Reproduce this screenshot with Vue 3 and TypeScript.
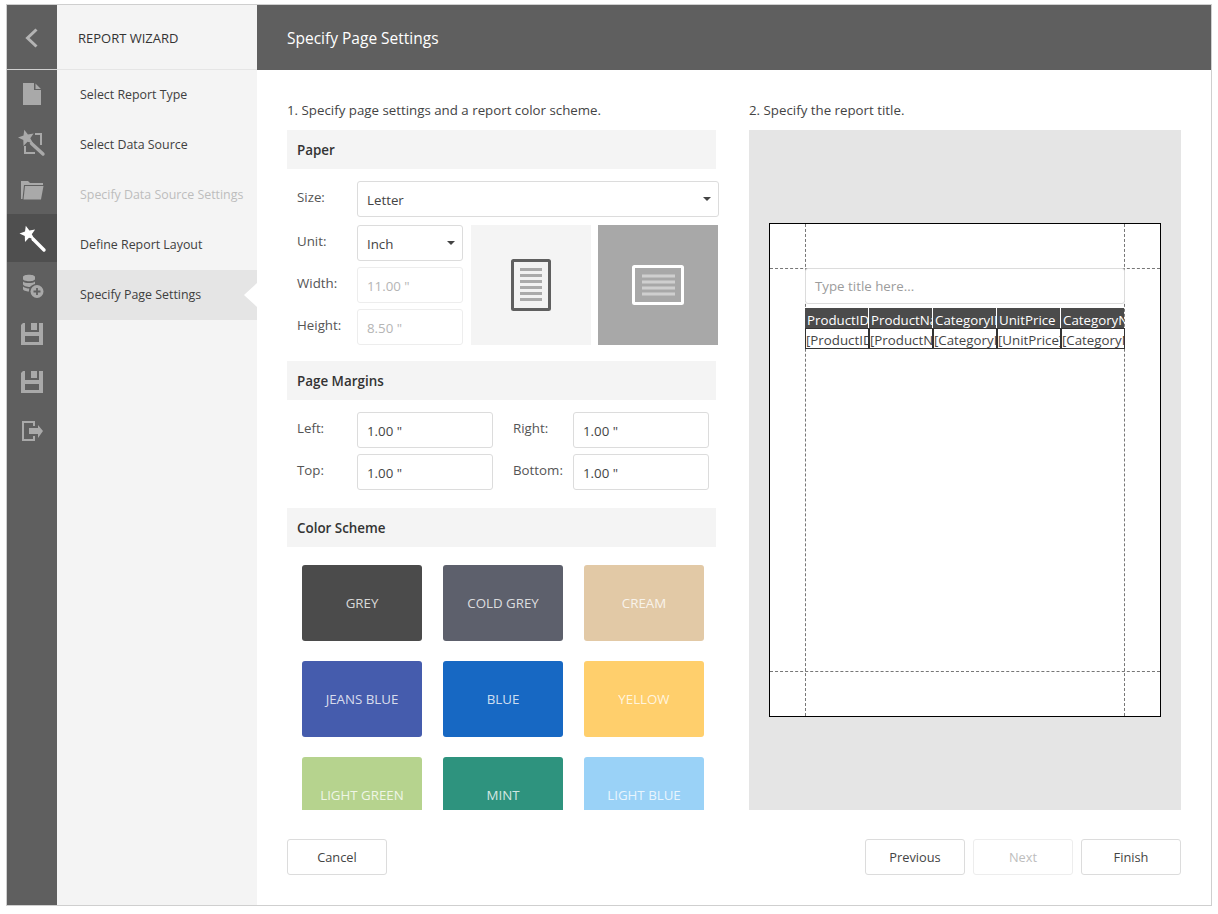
<script setup lang="ts">
import { ref } from 'vue'

interface Step {
  label: string
  disabled?: boolean
  active?: boolean
}

interface Scheme {
  name: string
  color: string
}

const steps = ref<Step[]>([
  { label: 'Select Report Type' },
  { label: 'Select Data Source' },
  { label: 'Specify Data Source Settings', disabled: true },
  { label: 'Define Report Layout' },
  { label: 'Specify Page Settings', active: true },
])

const schemes = ref<Scheme[]>([
  { name: 'GREY', color: '#4b4b4b' },
  { name: 'COLD GREY', color: '#5d606c' },
  { name: 'CREAM', color: '#e2c9a6' },
  { name: 'JEANS BLUE', color: '#455cad' },
  { name: 'BLUE', color: '#1768c3' },
  { name: 'YELLOW', color: '#ffcf6c' },
  { name: 'LIGHT GREEN', color: '#b6d38e' },
  { name: 'MINT', color: '#2e937e' },
  { name: 'LIGHT BLUE', color: '#9ad2f7' },
])

const columns = ref([
  { head: 'ProductID', cell: '[ProductID]' },
  { head: 'ProductName', cell: '[ProductName]' },
  { head: 'CategoryID', cell: '[CategoryID]' },
  { head: 'UnitPrice', cell: '[UnitPrice]' },
  { head: 'CategoryName', cell: '[CategoryName]' },
])
</script>

<template>
  <div class="screen">
    <div class="wizard">
      <aside class="rail">
        <div class="rail-back">
          <svg width="50" height="64" viewBox="0 0 50 64">
            <path d="M29.500 24.500 L20.500 33 L29.500 41.500" fill="none" stroke="#b4b4b4" stroke-width="3" />
          </svg>
        </div>
        <div class="rail-btn">
          <svg width="50" height="48" viewBox="0 0 50 48">
            <path d="M16 13 H27 V20 H34 V35 H16 Z M28.500 13.500 L34 19 H28.500 Z" fill="#a9a9a9" />
          </svg>
        </div>
        <div class="rail-btn">
          <svg width="50" height="48" viewBox="0 0 50 48">
            <path transform="translate(-1.500 0)" d="M18.800 11.800 L22.400 16.500 L28.100 15.400 L24.800 20.200 L27.600 25.300 L22 23.700 L18 27.900 L17.800 22.100 L12.500 19.600 L18 17.600 Z" fill="#a9a9a9" />
            <path d="M28 16 H34 V27 M18 28 V35 H28" fill="none" stroke="#a9a9a9" stroke-width="2" />
            <path d="M24.500 25.500 L36 36" fill="none" stroke="#a9a9a9" stroke-width="3.400" stroke-linecap="round" />
          </svg>
        </div>
        <div class="rail-btn">
          <svg width="50" height="48" viewBox="0 0 50 48">
            <path d="M14 15 H21 L23 17 H36 V19 H17 L15.500 33 H14 Z" fill="#a9a9a9" />
            <path d="M18 20 H36.500 L34 33.500 H16.500 Z" fill="#a9a9a9" />
          </svg>
        </div>
        <div class="rail-btn rail-current">
          <svg width="50" height="48" viewBox="0 0 50 48">
            <path d="M18.800 11.800 L22.400 16.500 L28.100 15.400 L24.800 20.200 L27.600 25.300 L22 23.700 L18 27.900 L17.800 22.100 L12.500 19.600 L18 17.600 Z" fill="#fff" />
            <path d="M26 25 L37 36" fill="none" stroke="#fff" stroke-width="3.400" stroke-linecap="round" />
          </svg>
        </div>
        <div class="rail-btn">
          <svg width="50" height="48" viewBox="0 0 50 48">
            <path d="M16 15 C16 12 28 12 28 15 V17 C28 20 16 20 16 17 Z M16 19.500 C18 21.500 26 21.500 28 19.500 V22 C26 22.500 24 23.500 23 25 C20 25 16 24 16 22 Z M16 24.500 C18 26 20 26.500 22.300 26.500 C22 27.500 22 28.500 22 29.500 C19 29.500 16 28.500 16 27 Z" fill="#a9a9a9" />
            <circle cx="30" cy="29.500" r="6.500" fill="#a9a9a9" />
            <path d="M30 26 V33 M26.500 29.500 H33.500" stroke="#5f5f5f" stroke-width="1.800" />
          </svg>
        </div>
        <div class="rail-btn">
          <svg width="50" height="48" viewBox="0 0 50 48">
            <path d="M16 13 H18 V22 H32 V13 H36 V35 H14 V15 Z M18 26 V32 H32 V26 Z M24 13 H30 V20 H24 Z" fill="#a9a9a9" fill-rule="evenodd" />
          </svg>
        </div>
        <div class="rail-btn">
          <svg width="50" height="48" viewBox="0 0 50 48">
            <path d="M16 13 H18 V22 H32 V13 H36 V35 H14 V15 Z M18 26 V32 H32 V26 Z M24 13 H30 V20 H24 Z" fill="#a9a9a9" fill-rule="evenodd" />
          </svg>
        </div>
        <div class="rail-btn">
          <svg width="50" height="48" viewBox="0 0 50 48">
            <path d="M27 20 V16 H16 V34 H27 V30" fill="none" stroke="#a9a9a9" stroke-width="2" />
            <path d="M22 22 H31 V19 L36 25 L31 32 V28 H22 Z" fill="#a9a9a9" />
          </svg>
        </div>
      </aside>

      <nav class="steps">
        <div class="steps-title">REPORT WIZARD</div>
        <div
          v-for="step in steps"
          :key="step.label"
          class="step"
          :class="{ 'step-off': step.disabled, 'step-on': step.active }"
        >
          {{ step.label }}
        </div>
      </nav>

      <main class="main">
        <header class="main-head">Specify Page Settings</header>
        <div class="body">
          <section class="column">
            <p class="hint">1. Specify page settings and a report color scheme.</p>
            <div class="scroller">
              <h3 class="group">Paper</h3>
              <div class="size-row">
                <label class="lbl">Size:</label>
                <div class="box select size-select">Letter<span class="caret"></span></div>
              </div>
              <div class="paper-row">
                <div class="paper-fields">
                  <div class="paper-field">
                    <label class="lbl">Unit:</label>
                    <div class="box select unit">Inch<span class="caret"></span></div>
                  </div>
                  <div class="paper-field">
                    <label class="lbl">Width:</label>
                    <div class="box unit off">11.00 "</div>
                  </div>
                  <div class="paper-field">
                    <label class="lbl">Height:</label>
                    <div class="box unit off">8.50 "</div>
                  </div>
                </div>
                <div class="orient">
                  <svg width="40" height="52" viewBox="0 0 40 52">
                    <rect x="1.500" y="1.500" width="37" height="49" fill="#f2f2f2" stroke="#5f5f5f" stroke-width="3" rx="1" />
                    <path d="M9 10.500 H31 M9 16.500 H31 M9 22.500 H31 M9 28.500 H31 M9 34.500 H31 M9 40.500 H31" stroke="#aaa" stroke-width="3" />
                  </svg>
                </div>
                <div class="orient orient-on">
                  <svg width="52" height="40" viewBox="0 0 52 40">
                    <rect x="1.500" y="1.500" width="49" height="37" fill="#a8a8a8" stroke="#fff" stroke-width="3" rx="1" />
                    <path d="M10 11 H43 M10 17 H43 M10 23 H43 M10 29 H43" stroke="#cfcfcf" stroke-width="3" />
                  </svg>
                </div>
              </div>

              <h3 class="group margins-head">Page Margins</h3>
              <div class="margins">
                <label class="lbl">Left:</label>
                <div class="box margin">1.00 "</div>
                <label class="lbl lbl-right">Right:</label>
                <div class="box margin">1.00 "</div>
                <label class="lbl">Top:</label>
                <div class="box margin">1.00 "</div>
                <label class="lbl lbl-right">Bottom:</label>
                <div class="box margin">1.00 "</div>
              </div>

              <h3 class="group">Color Scheme</h3>
              <div class="schemes">
                <div v-for="s in schemes" :key="s.name" class="scheme" :style="{ background: s.color }">
                  {{ s.name }}
                </div>
              </div>
            </div>
          </section>

          <section class="column">
            <p class="hint">2. Specify the report title.</p>
            <div class="preview">
              <div class="page">
                <span class="guide guide-v guide-l"></span>
                <span class="guide guide-v guide-r"></span>
                <span class="guide guide-h guide-t"></span>
                <span class="guide guide-h guide-b"></span>
                <div class="title-box">Type title here...</div>
                <div class="report-table">
                  <div v-for="c in columns" :key="c.head" class="report-col">
                    <div class="report-head">{{ c.head }}</div>
                    <div class="report-cell">{{ c.cell }}</div>
                  </div>
                </div>
              </div>
            </div>
          </section>
        </div>

        <footer class="actions">
          <button class="btn">Cancel</button>
          <span class="spacer"></span>
          <button class="btn">Previous</button>
          <button class="btn btn-off">Next</button>
          <button class="btn">Finish</button>
        </footer>
      </main>
    </div>
  </div>
</template>

<style>
html,
body {
  margin: 0;
  background: #fff;
}
</style>

<style scoped>
.screen {
  width: 1218px;
  height: 914px;
  padding: 4px 6px 8px 6px;
  box-sizing: border-box;
  font-family: 'Open Sans', 'Noto Sans', sans-serif;
  font-size: 13.3px;
  color: #555;
}

.wizard {
  display: flex;
  height: 100%;
  width: 1206px;
  border: 1px solid #cfcfcf;
  box-sizing: border-box;
  overflow: hidden;
}

.rail {
  width: 50px;
  flex: none;
  background: #5f5f5f;
}

.rail-back {
  height: 65px;
  border-bottom: 1px solid #d0d0d0;
  box-sizing: border-box;
}

.rail-back svg,
.rail-btn svg {
  display: block;
}

.rail-btn {
  height: 48px;
}

.rail-current {
  background: #4f4f4f;
}

.steps {
  width: 200px;
  flex: none;
  background: #f4f4f4;
  font-size: 12.4px;
  color: #404040;
}

.steps-title {
  height: 65px;
  line-height: 67px;
  padding-left: 21px;
  font-size: 13px;
  color: #333;
  border-bottom: 1px solid #e5e5e5;
  box-sizing: border-box;
}

.step {
  position: relative;
  height: 50px;
  line-height: 50px;
  padding-left: 23px;
}

.step-off {
  color: #bdbdbd;
}

.step-on {
  background: #e5e5e5;
}

.step-on::after {
  content: '';
  position: absolute;
  right: 0;
  top: 13px;
  border-style: solid;
  border-width: 12px 13px 12px 0;
  border-color: transparent #fff transparent transparent;
}

.main {
  flex: 1;
  min-width: 0;
  display: flex;
  flex-direction: column;
}

.main-head {
  height: 65px;
  line-height: 67px;
  padding-left: 30px;
  background: #5f5f5f;
  color: #fff;
  font-size: 15.5px;
  flex: none;
}

.body {
  display: flex;
  gap: 30px;
  padding: 30px 30px 0;
  height: 740px;
  box-sizing: border-box;
  flex: none;
}

.column {
  width: 432px;
  flex: none;
}

.hint {
  margin: 0;
  height: 30px;
  line-height: 20px;
  color: #444;
}

.scroller {
  height: 680px;
  overflow: hidden;
}

.group {
  margin: 0;
  width: 429px;
  height: 39px;
  line-height: 40px;
  padding-left: 10px;
  box-sizing: border-box;
  background: #f4f4f4;
  font-size: 13.4px;
  font-weight: 600;
  color: #333;
}

.margins-head {
  margin-top: 16px;
}

.lbl {
  display: block;
  width: 70px;
  padding-left: 10px;
  box-sizing: border-box;
  flex: none;
  line-height: 32px;
}

.box {
  height: 36px;
  line-height: 37px;
  padding-left: 9px;
  border: 1px solid #dcdcdc;
  border-radius: 3px;
  box-sizing: border-box;
  background: #fff;
  color: #444;
  position: relative;
}

.select .caret {
  position: absolute;
  right: 7px;
  top: 15px;
  border-style: solid;
  border-width: 4px 4px 0;
  border-color: #444 transparent transparent;
}

.size-row {
  display: flex;
  margin-top: 12px;
}

.size-select {
  width: 362px;
}

.paper-row {
  display: flex;
  margin-top: 8px;
}

.paper-fields {
  display: flex;
  flex-direction: column;
  gap: 6px;
}

.paper-field {
  display: flex;
}

.unit {
  width: 106px;
}

.off {
  color: #b5b5b5;
  border-color: #ededed;
}

.orient {
  width: 120px;
  height: 120px;
  margin-left: 8px;
  background: #f4f4f4;
  display: flex;
  align-items: center;
  justify-content: center;
}

.orient-on {
  background: #a8a8a8;
  margin-left: 7px;
}

.margins {
  display: grid;
  grid-template-columns: 70px 136px 80px 136px;
  row-gap: 6px;
  margin-top: 12px;
  margin-bottom: 18px;
}

.lbl-right {
  padding-left: 20px;
  width: 80px;
}

.schemes {
  display: grid;
  grid-template-columns: repeat(3, 120px);
  grid-auto-rows: 76px;
  column-gap: 21px;
  row-gap: 20px;
  padding: 18px 0 0 15px;
}

.scheme {
  display: flex;
  align-items: center;
  justify-content: center;
  border-radius: 3px;
  color: rgba(255, 255, 255, 0.8);
}

.preview {
  height: 680px;
  background: #e5e5e5;
  padding: 93px 20px 0;
  box-sizing: border-box;
}

.page {
  position: relative;
  height: 494px;
  background: #fff;
  border: 1px solid #000;
  box-sizing: border-box;
  padding: 44px 35px 0 35px;
}

.guide {
  position: absolute;
}

.guide-v {
  top: 0;
  bottom: 0;
  border-left: 1px dashed #777;
}

.guide-h {
  left: 0;
  right: 0;
  border-top: 1px dashed #777;
}

.guide-l {
  left: 35px;
}

.guide-r {
  right: 35px;
}

.guide-t {
  top: 44px;
}

.guide-b {
  bottom: 44px;
}

.title-box {
  position: relative;
  height: 36px;
  line-height: 35px;
  padding-left: 9px;
  background: #fff;
  border: 1px solid #dcdcdc;
  border-radius: 3px;
  box-sizing: border-box;
  color: #9c9c9c;
}

.report-table {
  position: relative;
  display: flex;
  margin-top: 4px;
}

.report-col {
  width: 64px;
  flex: none;
}

.report-head {
  height: 20px;
  line-height: 24px;
  margin-right: 1px;
  padding-left: 2px;
  background: #4b4b4b;
  color: #fff;
  overflow: hidden;
  white-space: nowrap;
}

.report-cell {
  height: 21px;
  line-height: 22px;
  padding-left: 0;
  border: 1px solid #333;
  box-sizing: border-box;
  background: #fff;
  color: #444;
  overflow: hidden;
  white-space: nowrap;
}

.actions {
  display: flex;
  gap: 8px;
  padding: 29px 30px 0;
}

.spacer {
  flex: 1;
}

.btn {
  width: 100px;
  height: 36px;
  border: 1px solid #dcdcdc;
  border-radius: 3px;
  background: #fff;
  color: #444;
  font-family: inherit;
  font-size: 12.8px;
}

.btn-off {
  color: #bdbdbd;
  border-color: #ededed;
}
</style>
